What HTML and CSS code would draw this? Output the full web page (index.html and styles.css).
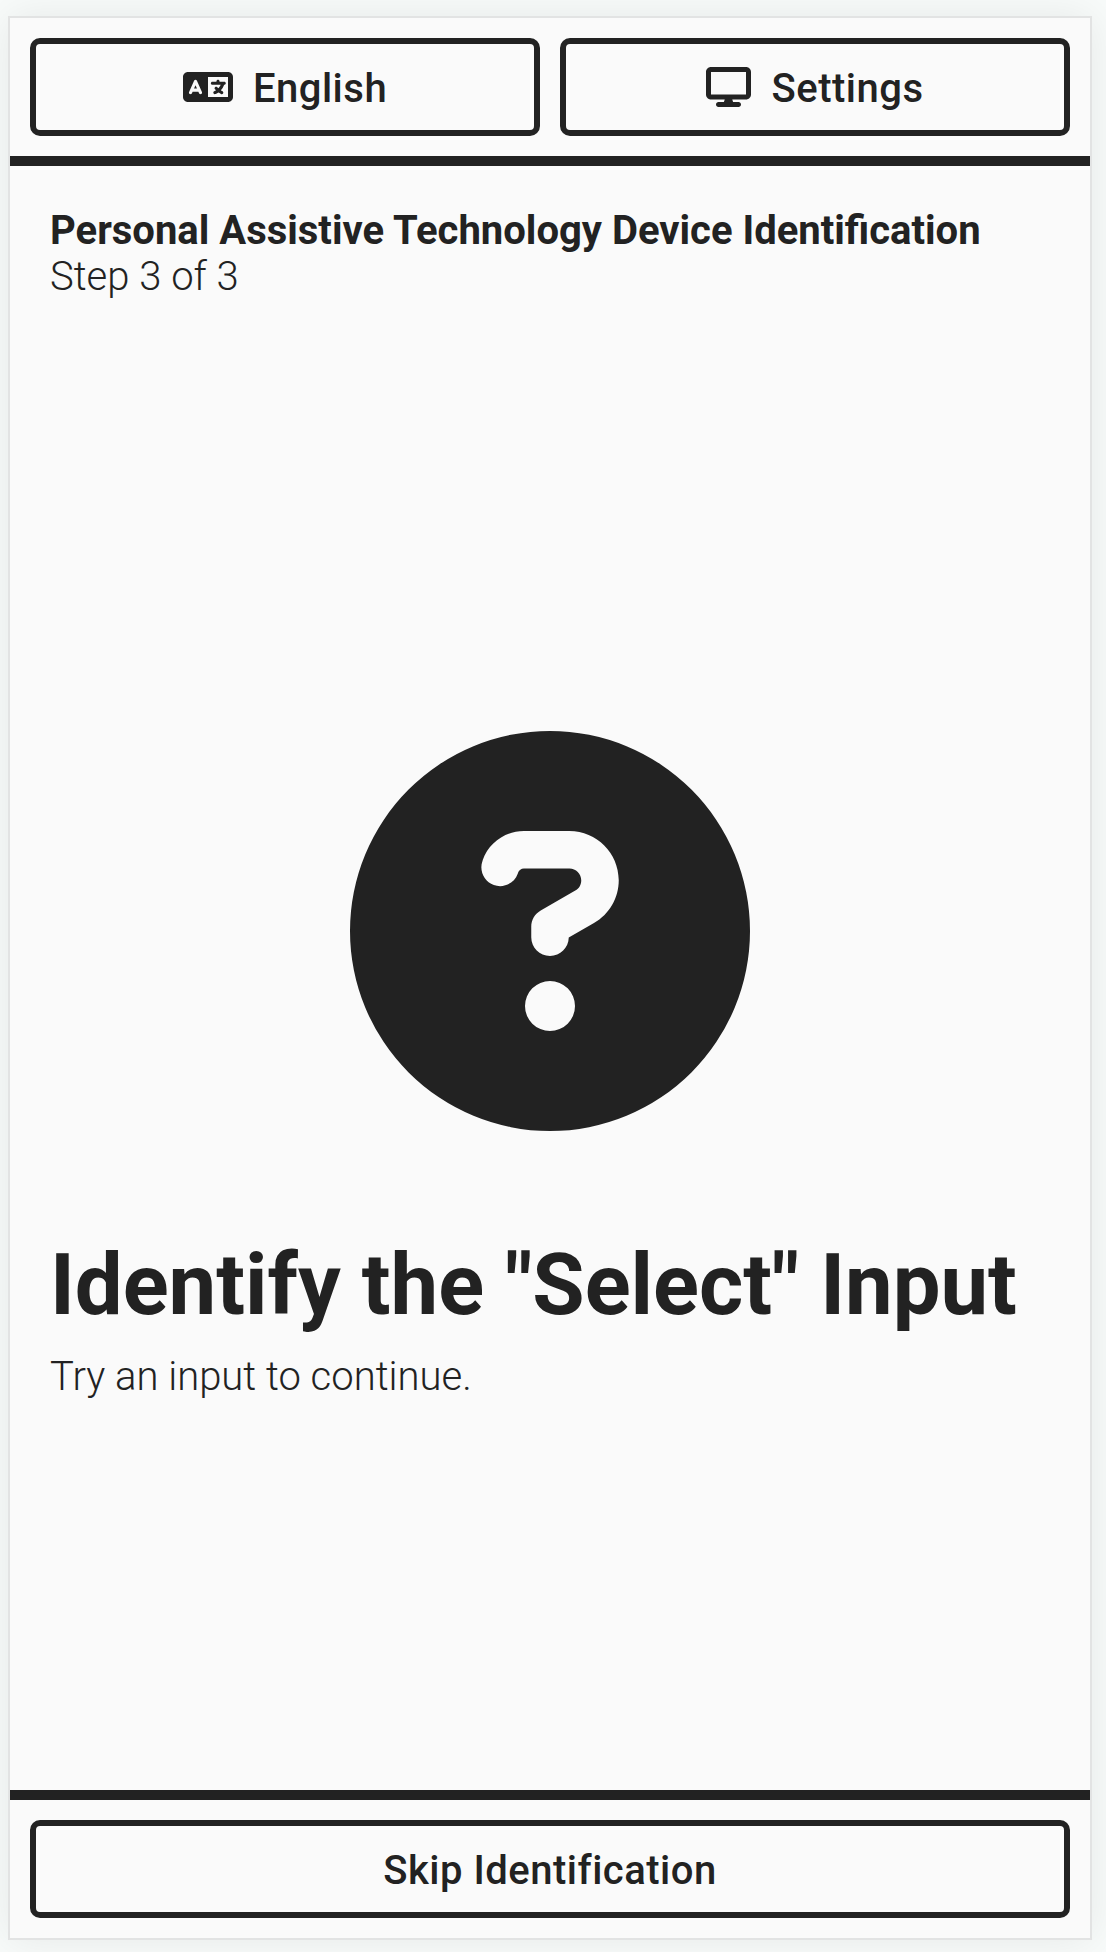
FILE: index.html
```html
<!DOCTYPE html>
<html lang="en">
<head>
<meta charset="utf-8">
<title>Device Identification</title>
<link rel="stylesheet" href="styles.css">
</head>
<body>
<div class="screen">
  <header class="toolbar">
    <button class="btn"><svg class="icon-language" viewBox="0 0 640 512"><path fill="currentColor" d="M0 128C0 92.700 28.700 64 64 64H576c35.300 0 64 28.700 64 64V384c0 35.300-28.700 64-64 64H64c-35.300 0-64-28.700-64-64V128zm320 0V384H576V128H320zM178.300 175.900c-3.200-7.200-10.400-11.900-18.300-11.900s-15.100 4.700-18.300 11.900l-64 144c-4.500 10.100 .1 21.900 10.200 26.400s21.900-.1 26.400-10.200l8.900-20.100h73.600l8.900 20.100c4.500 10.100 16.300 14.600 26.400 10.200s14.600-16.300 10.200-26.400l-64-144zM160 233.200L179 276H141l19-42.800zM448 164c11 0 20 9 20 20v4h60c11 0 20 9 20 20s-9 20-20 20h-2l-1.600 4.500c-8.900 24.400-22.400 46.600-39.600 65.400c.9 .6 1.800 1.100 2.700 1.600l18.900 11.300c9.500 5.700 12.500 18 6.900 27.400s-18 12.500-27.400 6.900l-18.900-11.300c-4.500-2.700-8.800-5.500-13.100-8.500c-10.600 7.500-21.900 14-34 19.400l-3.600 1.600c-10.100 4.500-21.900-.1-26.400-10.200s.1-21.900 10.200-26.400l3.600-1.600c6.400-2.900 12.600-6.100 18.500-9.800L410 286.100c-7.800-7.800-7.800-20.500 0-28.300s20.500-7.800 28.300 0l14.600 14.600 .5 .5c12.400-13.100 22.500-28.300 29.800-45H376c-11 0-20-9-20-20s9-20 20-20h52v-4c0-11 9-20 20-20z"/></svg><span class="label">English</span></button>
    <button class="btn"><svg class="icon-display" viewBox="0 0 576 512"><path fill="currentColor" d="M64 0C28.700 0 0 28.700 0 64V352c0 35.300 28.700 64 64 64H240l-10.700 32H160c-17.700 0-32 14.300-32 32s14.300 32 32 32H416c17.700 0 32-14.300 32-32s-14.300-32-32-32H346.700L336 416H512c35.300 0 64-28.700 64-64V64c0-35.300-28.700-64-64-64H64zM512 64V352H64V64H512z"/></svg><span class="label">Settings</span></button>
  </header>
  <main class="content">
    <div class="progress"><h2>Personal Assistive Technology Device Identification</h2><p>Step 3 of 3</p></div>
    <section class="prompt">
      <svg class="icon-question" viewBox="0 0 512 512"><path fill="currentColor" d="M256 512A256 256 0 1 0 256 0a256 256 0 1 0 0 512zM169.800 165.300c7.900-22.300 29.100-37.300 52.800-37.300h58.300c34.900 0 63.100 28.300 63.100 63.100c0 22.600-12.100 43.500-31.700 54.800L280 264.400c-.2 13-10.900 23.600-24 23.600c-13.300 0-24-10.700-24-24V250.500c0-8.600 4.600-16.500 12.100-20.800l44.300-25.400c4.700-2.700 7.600-7.700 7.600-13.100c0-8.400-6.800-15.100-15.100-15.100H222.600c-3.400 0-6.400 2.100-7.500 5.300l-.4 1.200c-4.400 12.500-18.200 19-30.600 14.600s-19-18.200-14.600-30.600l.4-1.200zM224 352a32 32 0 1 1 64 0 32 32 0 1 1 -64 0z"/></svg>
      <h1>Identify the "Select" Input</h1>
      <p>Try an input to continue.</p>
    </section>
  </main>
  <footer class="actions"><button class="btn"><span class="label">Skip Identification</span></button></footer>
</div>
</body>
</html>
```
FILE: styles.css
```css
* { box-sizing: border-box; margin: 0; }
body {
  height: 1952px;
  padding: 16px 14px 12px 8px;
  background: #f8fbfa;
  color: #222;
  font: 300 40px/46px Roboto, sans-serif;
}
.screen {
  display: flex;
  flex-direction: column;
  height: 1924px;
  border: 2px solid #e2e3e3;
  background: #fafafa;
  box-shadow: 0 0 40px rgba(0, 0, 0, .08);
}
.toolbar, .actions { display: flex; gap: 20px; padding: 20px; }
.toolbar { border-bottom: 10px solid #222; }
.actions { border-top: 10px solid #222; }
.btn {
  display: flex;
  flex: 1;
  align-items: center;
  justify-content: center;
  gap: 20px;
  height: 98px;
  padding: 0;
  border: 6px solid #222;
  border-radius: 10px;
  background: transparent;
  color: inherit;
  font: 500 40px/46px Roboto, sans-serif;
  letter-spacing: .5px;
}
.label { padding-top: 4px; }
.icon-language { width: 50px; height: 40px; }
.icon-display { width: 45px; height: 40px; }
.content { flex: 1; padding: 42px 40px 0; }
.progress h2 { font-size: 40px; line-height: 46px; font-weight: 700; }
.prompt { display: flex; flex-direction: column; padding-top: 430.6px; }
.icon-question { width: 400px; height: 400px; margin: 0 auto 104.4px; }
.prompt h1 { margin-bottom: 19px; font-size: 85px; line-height: 100px; font-weight: 700; }
```
